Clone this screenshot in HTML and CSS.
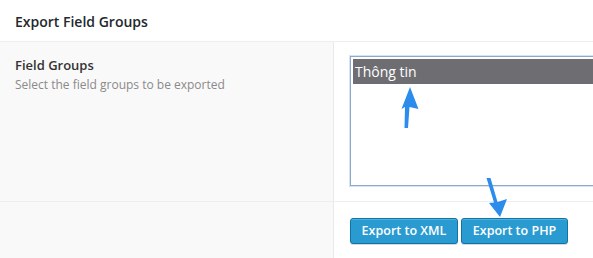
FILE: index.html
```html
<!DOCTYPE html>
<html>
<head>
<meta charset="utf-8">
<link rel="stylesheet" href="styles.css">
</head>
<body>
<div class="page">
  <div class="header">Export Field Groups</div>
  <div class="row row-main">
    <div class="label-cell">
      <div class="label">Field Groups</div>
      <div class="desc">Select the field groups to be exported</div>
    </div>
    <div class="field-cell">
      <div class="select">
        <div class="option selected">Thông tin</div>
      </div>
    </div>
  </div>
  <div class="row row-actions">
    <div class="label-cell"></div>
    <div class="field-cell actions">
      <button class="btn btn-xml">Export to XML</button>
      <button class="btn btn-php">Export to PHP</button>
    </div>
  </div>
  <svg class="arrows" width="593" height="258" viewBox="0 0 593 258">
    <path d="M410 87 L418.5 109 L409.5 107 L408 128 L404.5 128 L405 107 L401.5 109 Z" fill="#2b8cec"/>
    <path d="M486.5 178 L490.5 178 L497.5 202 L507 199 L500 217 L489 203 L494 202.5 Z" fill="#2b8cec"/>
  </svg>
</div>
</body>
</html>
```
FILE: styles.css
```css
html, body {
  margin: 0;
  padding: 0;
  background: #fff;
  overflow: hidden;
}
.page {
  position: relative;
  width: 593px;
  height: 258px;
  overflow: hidden;
  font-family: "Open Sans", "Noto Sans", sans-serif;
  color: #23282d;
}
.header {
  height: 42px;
  box-sizing: border-box;
  border-bottom: 1px solid #eeeeee;
  padding: 12px 15px 0;
  font-size: 14px;
  font-weight: 600;
  line-height: 20px;
  color: #23282d;
}
.row {
  display: flex;
}
.row-main {
  height: 159px;
  border-bottom: 1px solid #eeeeee;
}
.row-actions {
  height: 56px;
}
.label-cell {
  width: 334px;
  flex: none;
  background: #f9f9f9;
  border-right: 1px solid #e9e9e9;
  padding: 14px 15px 0;
  box-sizing: border-box;
}
.label {
  font-size: 13px;
  font-weight: 600;
  line-height: 18px;
  color: #333;
}
.desc {
  margin-top: 2px;
  font-size: 12px;
  line-height: 18px;
  color: #8a8a8a;
}
.field-cell {
  flex: 1;
  padding: 14px 0 0 16px;
  min-width: 0;
}
.select {
  width: 300px;
  height: 130px;
  box-sizing: border-box;
  border: 1px solid #8fa9c9;
  box-shadow: 0 0 0 1px #d6e4f2;
  padding: 2px;
  background: #fff;
}
.option {
  height: 25px;
  line-height: 25px;
  padding-left: 2px;
  font-size: 14px;
  color: #fff;
  white-space: nowrap;
}
.option.selected {
  background: #6e6e72;
}
.actions {
  padding-top: 16px;
  display: flex;
  gap: 3px;
  align-items: flex-start;
}
.btn {
  height: 26px;
  box-sizing: border-box;
  padding: 0 2px;
  border: 1px solid #0f75a8;
  border-radius: 3px;
  background: #2a9bd1;
  color: #fff;
  font-family: "Open Sans", "Noto Sans", sans-serif;
  font-size: 12.5px;
  font-weight: 600;
  line-height: 24px;
  white-space: nowrap;
  text-align: center;
  box-shadow: inset 0 1px 0 rgba(120,200,230,0.5), 0 1px 0 rgba(0,0,0,0.15);
  cursor: pointer;
}
.btn-xml {
  width: 108px;
}
.btn-php {
  width: 107px;
}
.arrows {
  position: absolute;
  left: 0;
  top: 0;
  pointer-events: none;
}
```
